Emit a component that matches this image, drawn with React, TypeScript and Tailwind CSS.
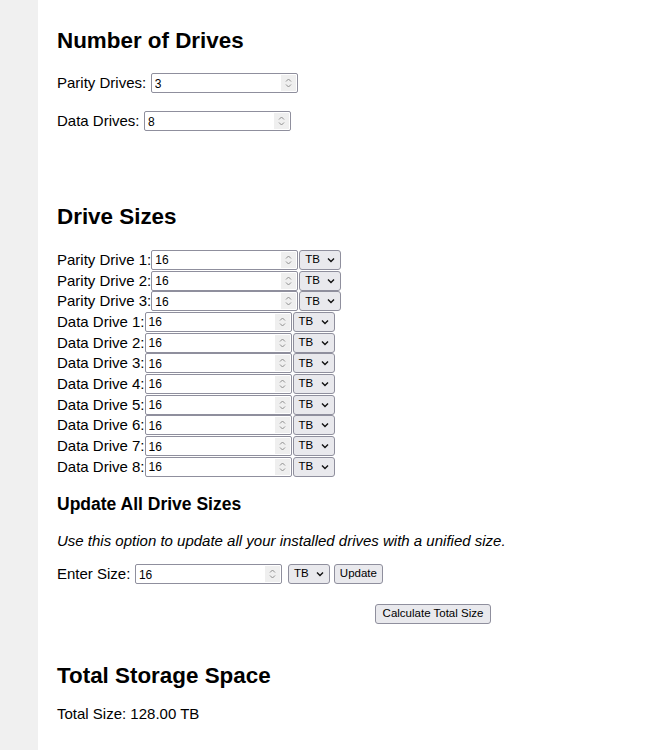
import React from "react";

const parityDrives = [1, 2, 3];
const dataDrives = [1, 2, 3, 4, 5, 6, 7, 8];

const Spinner: React.FC = () => (
  <div className="mr-[1px] flex h-[16px] w-[15px] items-center justify-center bg-[#efefef]">
    <svg width="7" height="12" viewBox="0 0 7 12">
      <path
        d="M1 4.5 L3.5 2 L6 4.5 M1 7.5 L3.5 10 L6 7.5"
        fill="none"
        stroke="#8e8e8e"
        strokeWidth="1"
      />
    </svg>
  </div>
);

const NumberBox: React.FC<{ value: string }> = ({ value }) => (
  <div className="flex h-[20px] w-[147px] shrink-0 items-center rounded-[2px] border border-[#8f8f9d] bg-white">
    <input
      type="text"
      defaultValue={value}
      className="h-full min-w-0 flex-1 bg-transparent pl-[3px] pt-[1px] text-[12px] text-black outline-none"
    />
    <Spinner />
  </div>
);

const UnitSelect: React.FC = () => (
  <div className="flex h-[20px] w-[42px] shrink-0 items-center justify-between rounded-[3px] border border-[#8f8f9d] bg-[#e9e9ed] pl-[5px] pr-[5px] text-[11.5px] text-black">
    <span>TB</span>
    <svg width="8" height="6" viewBox="0 0 8 6">
      <path d="M1 1.5 L4 4.5 L7 1.5" fill="none" stroke="#111" strokeWidth="1.4" />
    </svg>
  </div>
);

const DriveRow: React.FC<{ label: string }> = ({ label }) => (
  <div className="flex h-[20.7px] items-center">
    <span className="text-[15px] leading-[18px]">{label}</span>
    <NumberBox value="16" />
    <div className="ml-[1px]">
      <UnitSelect />
    </div>
  </div>
);

export default function App() {
  return (
    <div className="flex min-h-[750px] bg-white font-['Liberation_Sans',Arial,sans-serif] text-black">
      <div className="w-[38px] shrink-0 bg-[#f0f0f0]" />
      <div className="flex-1 pl-[19px] pt-[28px]">
        <h2 className="h-[26px] text-[22.4px] font-bold leading-[26px]">Number of Drives</h2>

        <div className="mt-[19px] flex h-[20px] items-center gap-[4.5px]">
          <span className="text-[15px]">Parity Drives:</span>
          <NumberBox value="3" />
        </div>
        <div className="mt-[18px] flex h-[20px] items-center gap-[4.5px]">
          <span className="text-[15px]">Data Drives:</span>
          <NumberBox value="8" />
        </div>

        <h2 className="mt-[73px] h-[26px] text-[22.4px] font-bold leading-[26px]">Drive Sizes</h2>

        <div className="mt-[19.5px] flex flex-col">
          {parityDrives.map((n) => (
            <DriveRow key={`p${n}`} label={`Parity Drive ${n}:`} />
          ))}
          {dataDrives.map((n) => (
            <DriveRow key={`d${n}`} label={`Data Drive ${n}:`} />
          ))}
        </div>

        <h3 className="mt-[17px] h-[20px] text-[17.5px] font-bold leading-[20px]">Update All Drive Sizes</h3>
        <p className="mt-[18px] h-[18px] text-[15px] italic leading-[18px]">
          Use this option to update all your installed drives with a unified size.
        </p>

        <div className="mt-[14px] flex h-[20px] items-center">
          <span className="text-[15px]">Enter Size:</span>
          <div className="ml-[4.5px]">
            <NumberBox value="16" />
          </div>
          <div className="ml-[6px]">
            <UnitSelect />
          </div>
          <button className="ml-[4px] h-[20px] w-[49px] rounded-[3px] border border-[#8f8f9d] bg-[#e9e9ed] text-[11.5px] text-black">
            Update
          </button>
        </div>

        <div className="mt-[20px] flex">
          <button className="ml-[318px] h-[20px] w-[116px] rounded-[3px] border border-[#8f8f9d] bg-[#e9e9ed] text-[11.5px] text-black">
            Calculate Total Size
          </button>
        </div>

        <h2 className="mt-[39px] h-[26px] text-[22.4px] font-bold leading-[26px]">Total Storage Space</h2>
        <p className="mt-[16px] h-[18px] text-[15px] leading-[18px]">Total Size: 128.00 TB</p>
      </div>
    </div>
  );
}
